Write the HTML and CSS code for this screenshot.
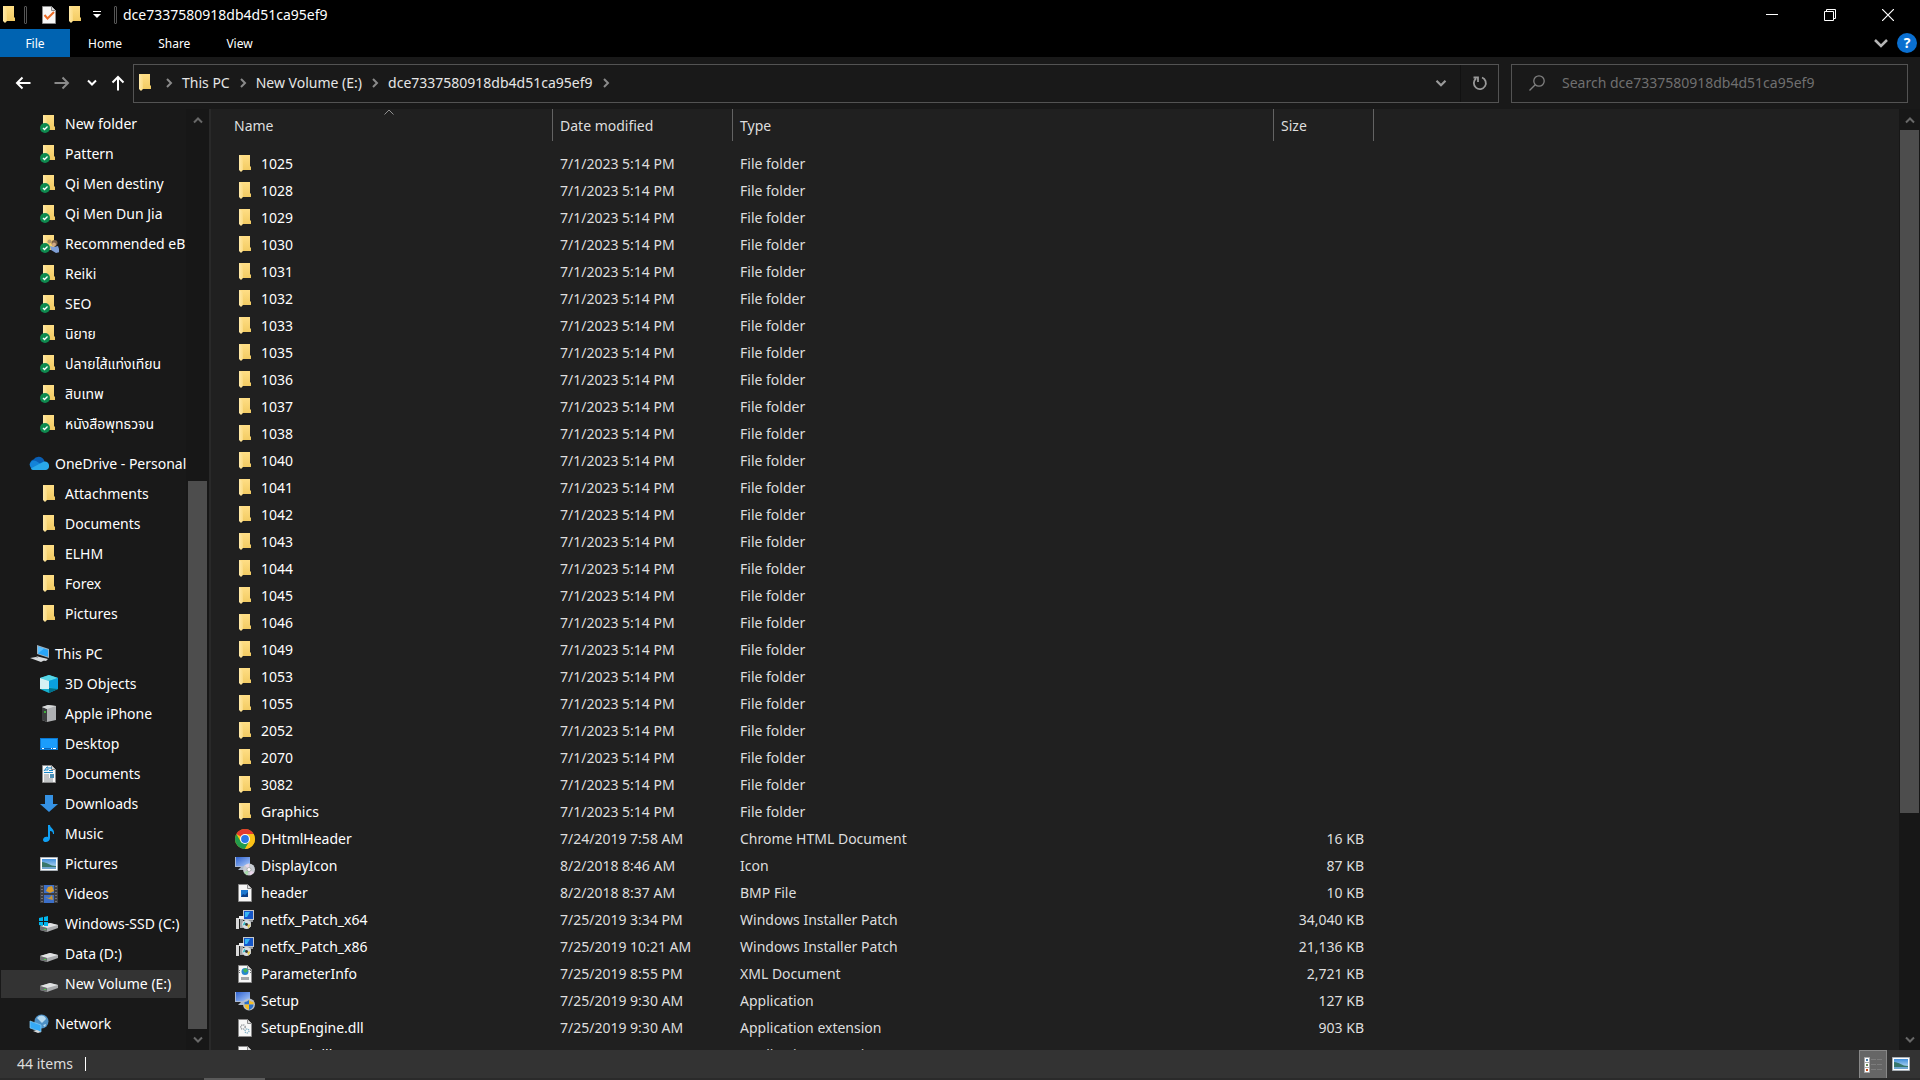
FILE: index.html
```html
<!DOCTYPE html>
<html lang="en">
<head>
<meta charset="utf-8">
<title>dce7337580918db4d51ca95ef9</title>
<link rel="stylesheet" href="styles.css">
</head>
<body>
<svg class="sprite" aria-hidden="true">
  <defs>
    <linearGradient id="g-front" x1="0" x2="1"><stop offset="0" stop-color="#ffe9a9"/><stop offset="1" stop-color="#fbdb82"/></linearGradient>
    <linearGradient id="g-back" x1="0" y1="0" x2="0" y2="1"><stop offset="0" stop-color="#ffde85"/><stop offset="1" stop-color="#f2cb63"/></linearGradient>
    <linearGradient id="g-screen" x1="0" y1="0" x2="1" y2="1"><stop offset="0" stop-color="#2f62cf"/><stop offset="1" stop-color="#a9c9fa"/></linearGradient>
    <linearGradient id="g-sky" x1="0" y1="0" x2="0" y2="1"><stop offset="0" stop-color="#3f8edb"/><stop offset="1" stop-color="#cfe9f7"/></linearGradient>
    <symbol id="folder" viewBox="0 0 20 20">
      <path d="M4 1h11v11l1 1v3H6z" fill="url(#g-back)"/>
      <path d="M4 1l4 2v13l-2 2-2-2z" fill="url(#g-front)"/>
    </symbol>
    <symbol id="synced" viewBox="0 0 20 20">
      <use href="#folder"/>
      <circle cx="6" cy="14" r="5" fill="#0f8a4f"/>
      <path d="M4 14l1.500 1.500L8.500 12.500" fill="none" stroke="#fff" stroke-width="1.300"/>
    </symbol>
    <symbol id="shared" viewBox="0 0 20 20">
      <use href="#synced"/>
      <circle cx="10.500" cy="7.500" r="2" fill="#b59a70"/><circle cx="15.500" cy="9" r="3" fill="#7c6245"/><circle cx="15" cy="10.500" r="2" fill="#d0a984"/>
      <path d="M11 12l4 1 4-1 2 6-4 1-5-3z" fill="#7f9fd6"/>
    </symbol>
    <symbol id="cloud" viewBox="0 0 20 20">
      <path d="M4 14a4.500 4.500 0 0 1 .5-8.500A6 6 0 0 1 15 6l1 4z" fill="#0a5fb4"/>
      <path d="M1 12a4.200 4.200 0 0 1 6-5l8 5-10 3a4 4 0 0 1-4-3z" fill="#1383d8"/>
      <path d="M15 7.500a4.200 4.200 0 0 1 5 4.500 3.500 3.500 0 0 1-3.500 4H5c-1.500 0-2.500-.5-3.200-1.500L12 9z" fill="#29a8ea"/>
    </symbol>
    <symbol id="pc" viewBox="0 0 20 20">
      <path d="M8 1l12 4v9L8 10z" fill="#9fb1bd"/><path d="M9 2.500l10 3.300v7L9 9.500z" fill="#29a5f7"/>
      <path d="M9 2.500l6 2-6 5z" fill="#5cc0ff"/>
      <path d="M7 12l12 3-2 2-5-1zM1 14l6-1 9 3-4 2z" fill="#d7dadc"/>
    </symbol>
    <symbol id="cube" viewBox="0 0 20 20">
      <path d="M10 1l9 3v11l-9 4-9-4V4z" fill="#16b1cf"/><path d="M10 1l9 3-9 3-9-3z" fill="#57d6e6"/>
      <path d="M1 4l9 3v8l-9 0z" fill="#d5f1f3"/><path d="M10 7l9-3v11l-9-2z" fill="#0aa0e0"/><path d="M10 14l9 1-9 4z" fill="#00708c"/>
    </symbol>
    <symbol id="device" viewBox="0 0 20 20">
      <path d="M3 3l6-2 8 1v14L8 18l-5-2z" fill="#aeb0b2"/><path d="M3 3l5 2v13l-5-2z" fill="#3b3d3e"/><path d="M3 3l6-2 8 1-9 3z" fill="#d6d8d9"/><path d="M5 7h2v2H5z" fill="#3fae3c"/>
    </symbol>
    <symbol id="desktop" viewBox="0 0 20 20">
      <path d="M1 4h18v12H1z" fill="#0b78d0"/><path d="M2 5h16v10H2z" fill="#1b9dfc"/><path d="M2 14h16v1H2z" fill="#0a64b8"/><path d="M3 14h2v1H3zM12 14h1v1h-1zM14 14h3v1h-3z" fill="#fff"/>
    </symbol>
    <symbol id="page" viewBox="0 0 20 20">
      <path d="M3.500 1.500h9l4 4v13h-13z" fill="#f7f7f7" stroke="#8b8b8b"/><path d="M12.500 1.500v4h4" fill="#ddd" stroke="#8b8b8b"/>
    </symbol>
    <symbol id="document" viewBox="0 0 20 20">
      <use href="#page"/><path d="M5 7l3-4h1v3H6M10 4h3M10 6.500h4M5 8.500h9" fill="none" stroke="#1686c7"/><path d="M5 11h5M5 13h5M5 15h9M5 17h9" stroke="#8c9296"/><path d="M11 10h4v4h-4z" fill="#4b8db4"/>
    </symbol>
    <symbol id="download" viewBox="0 0 20 20"><path d="M6 1h8v9h5l-9 8-9-8h5z" fill="#3592e4"/></symbol>
    <symbol id="music" viewBox="0 0 20 20"><path d="M9 1h2c0 3 5 4 4 9h-1c0-2-1-3-3-3v7c0 5-7 5-7 2s3-4 5-3z" fill="#10a0f4"/></symbol>
    <symbol id="picture" viewBox="0 0 20 20">
      <path d="M1.500 3.500h17v13h-17z" fill="#fff" stroke="#a9b0b6"/><path d="M3 5h14v10H3z" fill="url(#g-sky)"/><path d="M3 8c5 0 8 4 14 4v3H3z" fill="#37776b"/><path d="M3 13h14v2H3z" fill="#6fa6cf"/>
    </symbol>
    <symbol id="video" viewBox="0 0 20 20">
      <path d="M1 1h18v18H1z" fill="#3d3d40"/><path d="M5 1h10v8H5zM5 11h10v8H5z" fill="#3c6fc7"/><path d="M7 7l2-4 4-1 2 5-4 2z" fill="#d79a2b"/><path d="M6 13l4 1 3-3 1 5-4-1z" fill="#c79432"/><path d="M3 2v17M17 2v17" stroke="#a9a9a9" stroke-dasharray="1 2"/>
    </symbol>
    <symbol id="drive" viewBox="0 0 20 20">
      <path d="M1 12l10-3 8 2v3l-11 4-7-2z" fill="#a9abad"/><path d="M1 12l10-3 8 2-11 3z" fill="#e2e3e4"/><path d="M1 12l7 2v4l-7-2z" fill="#6d6f70"/><path d="M5 15h2v1H5z" fill="#4cd04a"/>
    </symbol>
    <symbol id="sysdrive" viewBox="0 0 20 20">
      <use href="#drive"/><path d="M0 4l4-1v4H0zM5 3l4-1v5H5zM0 8h4v4l-4-1zM5 8h4v4H5z" fill="#00b7ee"/>
    </symbol>
    <symbol id="network" viewBox="0 0 20 20">
      <circle cx="12.500" cy="7.500" r="7" fill="#4d90c5"/><path d="M8 4c3-4 8-3 9 1l-4 4-3-3zM14 11l3-1-1 3z" fill="#b5d9ef"/>
      <path d="M1 7l11 4v7L1 14z" fill="#35aaf7" stroke="#86d0fb" stroke-width=".7"/><path d="M4 17l4-1 4 2-3 1z" fill="#d7dadc"/>
    </symbol>
    <symbol id="chrome" viewBox="0 0 20 20">
      <circle cx="10" cy="10" r="10" fill="#fbc116"/><path d="M10 10L1.340 5A10 10 0 0 1 18.660 5z" fill="#e33b2e"/><path d="M1.340 5L5.700 12.500 10 15l-2 4.800A10 10 0 0 1 1.340 5z" fill="#229b4c"/><path d="M5.700 12.500L10 10l4.300 2.500L10 20 8 19.800z" fill="#229b4c"/><path d="M14.300 12.500L10 20A10 10 0 0 0 18.660 5H10z" fill="#fbc116"/>
      <circle cx="10" cy="10" r="5" fill="#fff"/><circle cx="10" cy="10" r="3.900" fill="#2a77e8"/>
    </symbol>
    <symbol id="monitor" viewBox="0 0 20 20">
      <path d="M0 1h15v10H0z" fill="#a9b9d6"/><path d="M1 1h14v9H1z" fill="url(#g-screen)"/><path d="M6 11h5l1 3H3z" fill="#aeb9ca"/>
    </symbol>
    <symbol id="disc" viewBox="0 0 20 20">
      <use href="#monitor"/><circle cx="14" cy="13.500" r="6" fill="#c8ccd2"/><path d="M14 13.500l-4-4 4-2zM14 13.500l5 3-4 3z" fill="#e9d6ea"/><path d="M14 13.500l-5 3 3 3z" fill="#a6dba9"/><circle cx="14" cy="13.500" r="2" fill="#fff" stroke="#999" stroke-width=".7"/>
    </symbol>
    <symbol id="setup" viewBox="0 0 20 20">
      <use href="#monitor"/><circle cx="14" cy="13.500" r="6" fill="#b8bfca"/><path d="M14 9v4.500H9.500V11c2 0 3-1 4.500-2z" fill="#2a6fc9"/><path d="M14 9c1.500 1 2.500 2 4.500 2v2.500H14z" fill="#f5bd24"/><path d="M9.500 13.500H14V19c-3-1-4.500-3-4.500-5.500z" fill="#f5bd24"/><path d="M18.500 13.500H14V19c3-1 4.500-3 4.500-5.500z" fill="#2a6fc9"/>
    </symbol>
    <symbol id="bmp" viewBox="0 0 20 20"><use href="#page"/><path d="M6 7h7v7H6z" fill="#1d78d0"/><path d="M6 14l2-3 2 1 3-3v5z" fill="#0b3e86"/></symbol>
    <symbol id="patch" viewBox="0 0 20 20">
      <path d="M8 0h11v10H8z" fill="#c5c8cb"/><path d="M9 1h9v8H9z" fill="#1556c8"/><path d="M10 2h5l-3 5h-2z" fill="#35b6f5"/><path d="M10 10h8v2h-8z" fill="#95999c"/>
      <path d="M1 8h3v11H1z" fill="#d9d9d9"/><path d="M5 7h3v11H5z" fill="#a2a4a6"/><path d="M4 6h5v3H4z" fill="#eee"/><path d="M8 11h8v6H8z" fill="#a5a7a9"/>
      <circle cx="11.500" cy="14.500" r="4.500" fill="#d9dde0"/><path d="M11.500 14.500l-4 1 2-4z" fill="#3abfca"/><path d="M11.500 14.500l4 0-2 4z" fill="#e2c84d"/><circle cx="11.500" cy="14.500" r="1.400" fill="#333"/>
    </symbol>
    <symbol id="xml" viewBox="0 0 20 20"><use href="#page"/><circle cx="10" cy="7.500" r="3.500" fill="#2687cf"/><path d="M8 6l3-2 2 3-3 2z" fill="#46b254"/><path d="M5 6L3.500 7.500 5 9M15 6l1.500 1.500L15 9" fill="none" stroke="#777"/><path d="M6 13h8v3H6z" fill="#a4a7aa"/></symbol>
    <symbol id="dll" viewBox="0 0 20 20"><use href="#page"/><circle cx="8" cy="9" r="2.200" fill="none" stroke="#8d9296" stroke-dasharray="1.200 .7" stroke-width="1.300"/><circle cx="12" cy="13" r="2" fill="none" stroke="#7fb0c6" stroke-dasharray="1.200 .7" stroke-width="1.300"/></symbol>
    <symbol id="check" viewBox="0 0 20 20"><use href="#page"/><path d="M5.500 10l3 3.500L15 7" fill="none" stroke="#ea6a24" stroke-width="2"/></symbol>
    <symbol id="details" viewBox="0 0 20 20">
      <path d="M1.500 2.500h5v5h-5zM1.500 7.500h5v5h-5zM1.500 12.500h5v5h-5z" fill="#fff" stroke="#aaa"/><path d="M3 4h2v2H3z" fill="#487ca8"/><path d="M3 9h2v2H3z" fill="#6f8b57"/><path d="M3 14h2v2H3z" fill="#c94c1b"/><path d="M8 4.500h5M14 4.500h5M8 9.500h5M14 9.500h5M8 14.500h5M14 14.500h5" stroke="#7c7c7c"/>
    </symbol>
    <symbol id="chev-up" viewBox="0 0 10 8"><path d="M1 6.500l4-4 4 4" fill="none" stroke="currentColor" stroke-width="2"/></symbol>
    <symbol id="chev-down" viewBox="0 0 10 8"><path d="M1 1.500l4 4 4-4" fill="none" stroke="currentColor" stroke-width="2"/></symbol>
    <symbol id="chev-right" viewBox="0 0 8 10"><path d="M2 1l4 4-4 4" fill="none" stroke="currentColor" stroke-width="2"/></symbol>
    <symbol id="arrow" viewBox="0 0 16 14"><path d="M15.500 7H2M7.500 1.500L2 7l5.500 5.500" fill="none" stroke="currentColor" stroke-width="2"/></symbol>
  </defs>
</svg>

<div class="window">
  <header class="titlebar">
    <svg class="icon"><use href="#folder"/></svg>
    <span class="rule"></span>
    <button class="quick" aria-label="Properties"><svg class="icon"><use href="#check"/></svg></button>
    <button class="quick" aria-label="New folder"><svg class="icon"><use href="#folder"/></svg></button>
    <button class="quick narrow" aria-label="Customize toolbar"><svg width="8" height="8" viewBox="0 0 8 8"><path d="M0 .5h8" stroke="#fff"/><path d="M0 3h8L4 7z" fill="#fff"/></svg></button>
    <span class="rule"></span>
    <h1 class="title">dce7337580918db4d51ca95ef9</h1>
    <div class="caption">
      <button aria-label="Minimize"><svg width="12" height="12" viewBox="0 0 12 12"><path d="M0 5.500h12" stroke="#fff"/></svg></button>
      <button aria-label="Restore"><svg width="12" height="12" viewBox="0 0 12 12"><path d="M.5 2.500h9v9h-9zM2.500 2.500v-2h9v9h-2" fill="none" stroke="#fff"/></svg></button>
      <button aria-label="Close"><svg width="12" height="12" viewBox="0 0 12 12"><path d="M0 0l12 12M12 0L0 12" stroke="#fff" stroke-width="1.200"/></svg></button>
    </div>
  </header>

  <nav class="ribbon" aria-label="Ribbon">
    <button class="tab file">File</button>
    <button class="tab">Home</button>
    <button class="tab">Share</button>
    <button class="tab">View</button>
    <div class="ribbon-end">
      <button class="expand" aria-label="Expand ribbon"><svg width="14" height="10" viewBox="0 0 14 10"><path d="M1 2l6 6 6-6" fill="none" stroke="currentColor" stroke-width="2.500"/></svg></button>
      <button class="help" aria-label="Help">?</button>
    </div>
  </nav>

  <div class="navbar">
    <button class="nav back" aria-label="Back"><svg width="16" height="14"><use href="#arrow"/></svg></button>
    <button class="nav forward" aria-label="Forward"><svg width="16" height="14"><use href="#arrow"/></svg></button>
    <button class="nav recent" aria-label="Recent locations"><svg width="10" height="8"><use href="#chev-down"/></svg></button>
    <button class="nav up" aria-label="Up"><svg width="16" height="14"><use href="#arrow"/></svg></button>
    <div class="address">
      <svg class="icon"><use href="#folder"/></svg>
      <svg class="sep"><use href="#chev-right"/></svg>
      <a href="#">This PC</a>
      <svg class="sep"><use href="#chev-right"/></svg>
      <a href="#">New Volume (E:)</a>
      <svg class="sep"><use href="#chev-right"/></svg>
      <a href="#">dce7337580918db4d51ca95ef9</a>
      <svg class="sep"><use href="#chev-right"/></svg>
      <button class="history" aria-label="Previous locations"><svg width="12" height="9" viewBox="0 0 10 8"><use href="#chev-down"/></svg></button>
      <button class="refresh" aria-label="Refresh"><svg width="16" height="16" viewBox="0 0 16 16"><path d="M10 2.500A6 6 0 1 1 4 3.500M1.500 2.500h4.500v4.500" fill="none" stroke="currentColor" stroke-width="1.800"/></svg></button>
    </div>
    <label class="search">
      <svg width="16" height="16" viewBox="0 0 16 16"><circle cx="10" cy="6" r="5.200" fill="none" stroke="currentColor" stroke-width="1.300"/><path d="M6.200 9.800L.5 15.500" stroke="currentColor" stroke-width="1.300"/></svg>
      <input type="text" aria-label="Search" placeholder="Search dce7337580918db4d51ca95ef9">
    </label>
  </div>

  <div class="body">
    <aside class="sidebar">
      <nav class="tree" aria-label="Folders">
        <ul>
          <li><a href="#"><svg class="icon"><use href="#synced"/></svg>New folder</a></li>
          <li><a href="#"><svg class="icon"><use href="#synced"/></svg>Pattern</a></li>
          <li><a href="#"><svg class="icon"><use href="#synced"/></svg>Qi Men destiny</a></li>
          <li><a href="#"><svg class="icon"><use href="#synced"/></svg>Qi Men Dun Jia</a></li>
          <li><a href="#"><svg class="icon"><use href="#shared"/></svg>Recommended eB</a></li>
          <li><a href="#"><svg class="icon"><use href="#synced"/></svg>Reiki</a></li>
          <li><a href="#"><svg class="icon"><use href="#synced"/></svg>SEO</a></li>
          <li><a href="#" lang="th"><svg class="icon"><use href="#synced"/></svg>นิยาย</a></li>
          <li><a href="#" lang="th"><svg class="icon"><use href="#synced"/></svg>ปลายไส้แท่งเทียน</a></li>
          <li><a href="#" lang="th"><svg class="icon"><use href="#synced"/></svg>สิบเทพ</a></li>
          <li><a href="#" lang="th"><svg class="icon"><use href="#synced"/></svg>หนังสือพุทธวจน</a></li>
        </ul>
        <ul>
          <li><a href="#" class="root"><svg class="icon"><use href="#cloud"/></svg>OneDrive - Personal</a></li>
          <li><a href="#"><svg class="icon"><use href="#folder"/></svg>Attachments</a></li>
          <li><a href="#"><svg class="icon"><use href="#folder"/></svg>Documents</a></li>
          <li><a href="#"><svg class="icon"><use href="#folder"/></svg>ELHM</a></li>
          <li><a href="#"><svg class="icon"><use href="#folder"/></svg>Forex</a></li>
          <li><a href="#"><svg class="icon"><use href="#folder"/></svg>Pictures</a></li>
        </ul>
        <ul>
          <li><a href="#" class="root"><svg class="icon"><use href="#pc"/></svg>This PC</a></li>
          <li><a href="#"><svg class="icon"><use href="#cube"/></svg>3D Objects</a></li>
          <li><a href="#"><svg class="icon"><use href="#device"/></svg>Apple iPhone</a></li>
          <li><a href="#"><svg class="icon"><use href="#desktop"/></svg>Desktop</a></li>
          <li><a href="#"><svg class="icon"><use href="#document"/></svg>Documents</a></li>
          <li><a href="#"><svg class="icon"><use href="#download"/></svg>Downloads</a></li>
          <li><a href="#"><svg class="icon"><use href="#music"/></svg>Music</a></li>
          <li><a href="#"><svg class="icon"><use href="#picture"/></svg>Pictures</a></li>
          <li><a href="#"><svg class="icon"><use href="#video"/></svg>Videos</a></li>
          <li><a href="#"><svg class="icon"><use href="#sysdrive"/></svg>Windows-SSD (C:)</a></li>
          <li><a href="#"><svg class="icon"><use href="#drive"/></svg>Data (D:)</a></li>
          <li><a href="#" class="selected" aria-current="page"><svg class="icon"><use href="#drive"/></svg>New Volume (E:)</a></li>
        </ul>
        <ul>
          <li><a href="#" class="root"><svg class="icon"><use href="#network"/></svg>Network</a></li>
        </ul>
      </nav>
      <div class="scrollbar tree-scroll">
        <svg class="step"><use href="#chev-up"/></svg>
        <div class="track"><div class="thumb"></div></div>
        <svg class="step"><use href="#chev-down"/></svg>
      </div>
    </aside>

    <main class="files">
      <div class="listing">
        <table>
          <colgroup><col class="c-name"><col class="c-date"><col class="c-type"><col class="c-size"></colgroup>
          <thead>
            <tr>
              <th scope="col" aria-sort="ascending">Name<svg class="sort" width="10" height="6" viewBox="0 0 10 6"><path d="M.5 5.500L5 1l4.500 4.500" fill="none" stroke="#8f8f8f"/></svg></th>
              <th scope="col">Date modified</th><th scope="col">Type</th><th scope="col">Size</th>
            </tr>
          </thead>
          <tbody>
            <tr><td><svg class="icon"><use href="#folder"/></svg>1025</td><td>7/1/2023 5:14 PM</td><td>File folder</td><td></td></tr>
            <tr><td><svg class="icon"><use href="#folder"/></svg>1028</td><td>7/1/2023 5:14 PM</td><td>File folder</td><td></td></tr>
            <tr><td><svg class="icon"><use href="#folder"/></svg>1029</td><td>7/1/2023 5:14 PM</td><td>File folder</td><td></td></tr>
            <tr><td><svg class="icon"><use href="#folder"/></svg>1030</td><td>7/1/2023 5:14 PM</td><td>File folder</td><td></td></tr>
            <tr><td><svg class="icon"><use href="#folder"/></svg>1031</td><td>7/1/2023 5:14 PM</td><td>File folder</td><td></td></tr>
            <tr><td><svg class="icon"><use href="#folder"/></svg>1032</td><td>7/1/2023 5:14 PM</td><td>File folder</td><td></td></tr>
            <tr><td><svg class="icon"><use href="#folder"/></svg>1033</td><td>7/1/2023 5:14 PM</td><td>File folder</td><td></td></tr>
            <tr><td><svg class="icon"><use href="#folder"/></svg>1035</td><td>7/1/2023 5:14 PM</td><td>File folder</td><td></td></tr>
            <tr><td><svg class="icon"><use href="#folder"/></svg>1036</td><td>7/1/2023 5:14 PM</td><td>File folder</td><td></td></tr>
            <tr><td><svg class="icon"><use href="#folder"/></svg>1037</td><td>7/1/2023 5:14 PM</td><td>File folder</td><td></td></tr>
            <tr><td><svg class="icon"><use href="#folder"/></svg>1038</td><td>7/1/2023 5:14 PM</td><td>File folder</td><td></td></tr>
            <tr><td><svg class="icon"><use href="#folder"/></svg>1040</td><td>7/1/2023 5:14 PM</td><td>File folder</td><td></td></tr>
            <tr><td><svg class="icon"><use href="#folder"/></svg>1041</td><td>7/1/2023 5:14 PM</td><td>File folder</td><td></td></tr>
            <tr><td><svg class="icon"><use href="#folder"/></svg>1042</td><td>7/1/2023 5:14 PM</td><td>File folder</td><td></td></tr>
            <tr><td><svg class="icon"><use href="#folder"/></svg>1043</td><td>7/1/2023 5:14 PM</td><td>File folder</td><td></td></tr>
            <tr><td><svg class="icon"><use href="#folder"/></svg>1044</td><td>7/1/2023 5:14 PM</td><td>File folder</td><td></td></tr>
            <tr><td><svg class="icon"><use href="#folder"/></svg>1045</td><td>7/1/2023 5:14 PM</td><td>File folder</td><td></td></tr>
            <tr><td><svg class="icon"><use href="#folder"/></svg>1046</td><td>7/1/2023 5:14 PM</td><td>File folder</td><td></td></tr>
            <tr><td><svg class="icon"><use href="#folder"/></svg>1049</td><td>7/1/2023 5:14 PM</td><td>File folder</td><td></td></tr>
            <tr><td><svg class="icon"><use href="#folder"/></svg>1053</td><td>7/1/2023 5:14 PM</td><td>File folder</td><td></td></tr>
            <tr><td><svg class="icon"><use href="#folder"/></svg>1055</td><td>7/1/2023 5:14 PM</td><td>File folder</td><td></td></tr>
            <tr><td><svg class="icon"><use href="#folder"/></svg>2052</td><td>7/1/2023 5:14 PM</td><td>File folder</td><td></td></tr>
            <tr><td><svg class="icon"><use href="#folder"/></svg>2070</td><td>7/1/2023 5:14 PM</td><td>File folder</td><td></td></tr>
            <tr><td><svg class="icon"><use href="#folder"/></svg>3082</td><td>7/1/2023 5:14 PM</td><td>File folder</td><td></td></tr>
            <tr><td><svg class="icon"><use href="#folder"/></svg>Graphics</td><td>7/1/2023 5:14 PM</td><td>File folder</td><td></td></tr>
            <tr><td><svg class="icon"><use href="#chrome"/></svg>DHtmlHeader</td><td>7/24/2019 7:58 AM</td><td>Chrome HTML Document</td><td>16 KB</td></tr>
            <tr><td><svg class="icon"><use href="#disc"/></svg>DisplayIcon</td><td>8/2/2018 8:46 AM</td><td>Icon</td><td>87 KB</td></tr>
            <tr><td><svg class="icon"><use href="#bmp"/></svg>header</td><td>8/2/2018 8:37 AM</td><td>BMP File</td><td>10 KB</td></tr>
            <tr><td><svg class="icon"><use href="#patch"/></svg>netfx_Patch_x64</td><td>7/25/2019 3:34 PM</td><td>Windows Installer Patch</td><td>34,040 KB</td></tr>
            <tr><td><svg class="icon"><use href="#patch"/></svg>netfx_Patch_x86</td><td>7/25/2019 10:21 AM</td><td>Windows Installer Patch</td><td>21,136 KB</td></tr>
            <tr><td><svg class="icon"><use href="#xml"/></svg>ParameterInfo</td><td>7/25/2019 8:55 PM</td><td>XML Document</td><td>2,721 KB</td></tr>
            <tr><td><svg class="icon"><use href="#setup"/></svg>Setup</td><td>7/25/2019 9:30 AM</td><td>Application</td><td>127 KB</td></tr>
            <tr><td><svg class="icon"><use href="#dll"/></svg>SetupEngine.dll</td><td>7/25/2019 9:30 AM</td><td>Application extension</td><td>903 KB</td></tr>
            <tr><td><svg class="icon"><use href="#dll"/></svg>SetupUi.dll</td><td>7/25/2019 9:30 AM</td><td>Application extension</td><td>343 KB</td></tr>
          </tbody>
        </table>
      </div>
      <div class="scrollbar file-scroll">
        <svg class="step"><use href="#chev-up"/></svg>
        <div class="track"><div class="thumb"></div></div>
        <svg class="step"><use href="#chev-down"/></svg>
      </div>
    </main>
  </div>

  <footer class="status">
    <span class="count">44 items</span>
    <button class="view on" aria-label="Details view" aria-pressed="true"><svg class="icon"><use href="#details"/></svg></button>
    <button class="view" aria-label="Large thumbnails"><svg class="icon"><use href="#picture"/></svg></button>
  </footer>
  <div class="taskbar"><span class="task"></span></div>
</div>
</body>
</html>
```
FILE: styles.css
```css
* { box-sizing: border-box; }
body {
  margin: 0;
  background: #191919;
  color: #fff;
  font: 14px/20px "Noto Sans", "Noto Sans Thai", "Open Sans", sans-serif;
}
button {
  display: flex; align-items: center; justify-content: center;
  margin: 0; padding: 0; border: 0;
  background: none; color: inherit; font: inherit;
}
a { color: inherit; text-decoration: none; }
ul { list-style: none; margin: 0; padding: 0; }
svg { flex: none; display: block; }
.sprite { position: absolute; width: 0; height: 0; }
.icon { width: 20px; height: 20px; }

.window { display: flex; flex-direction: column; height: 100vh; overflow: hidden; }

.titlebar { display: flex; align-items: center; height: 29px; background: #000; flex: none; }
.titlebar > .icon { margin-left: -1px; margin-right: 5px; }
.rule { width: 3px; height: 18px; border: 1px solid #555; border-radius: 1px; }
.quick { width: 26px; }
.rule + .quick { margin-left: 9px; }
.quick.narrow { width: 18px; margin-right: 8px; }
.title { margin: 0 0 0 6px; font-size: 14px; font-weight: 400; }
.caption { display: flex; margin-left: auto; padding-right: 3px; align-self: stretch; }
.caption button { width: 58px; }

.ribbon { display: flex; height: 28px; background: #000; font-size: 12px; flex: none; }
.tab { padding: 1px 18px 0; }
.tab.file { width: 70px; background: #0063b1; }
.ribbon-end { display: flex; align-items: center; gap: 9px; margin-left: auto; padding-right: 3px; }
.expand { color: #b5b5b5; }
.help { width: 20px; height: 20px; border-radius: 50%; background: #0a6fd0; font-size: 14px; font-weight: 700; }

.navbar { display: flex; align-items: center; height: 52px; padding: 0 12px 0 15px; flex: none; }
.nav.forward { margin-left: 23px; color: #8a8a8a; }
.nav.forward svg { transform: rotate(180deg); }
.nav.recent { margin-left: 17px; }
.nav.up { margin: 0 7px 0 13px; }
.nav.up svg { transform: rotate(90deg); }
.address { display: flex; align-items: center; flex: 1; height: 39px; padding-left: 1px; border: 1px solid #535353; color: #e6e6e6; }
.address .icon { margin-right: 10px; }
.sep { width: 8px; height: 10px; margin: 0 9px; color: #8a8a8a; }
.address .icon + .sep { margin-left: 0; }
.history { width: 38px; margin-left: auto; color: #999; }
.refresh { width: 38px; align-self: stretch; border-left: 1px solid #111; color: #999; }
.search { display: flex; align-items: center; gap: 17px; width: 397px; height: 39px; margin-left: 12px; padding: 0 17px; border: 1px solid #535353; color: #808080; }
.search input { flex: 1; min-width: 0; padding: 0; border: 0; outline: 0; background: none; color: #fff; font: inherit; }
.search input::placeholder { color: #707070; opacity: 1; }

.body { display: flex; flex: 1; min-height: 0; }
.sidebar { display: flex; width: 211px; border-right: 2px solid #292929; flex: none; }
.tree { flex: 1; min-width: 0; padding-left: 1px; overflow: hidden; }
.tree ul + ul { margin-top: 10px; }
.tree li { height: 30px; padding-top: 1px; }
.tree a { display: flex; align-items: center; gap: 6px; height: 28px; padding-left: 38px; white-space: nowrap; overflow: hidden; }
.tree a.root { padding-left: 28px; }
.tree a.selected { background: #333; }

.scrollbar { display: flex; flex-direction: column; background: #171717; color: #686868; flex: none; }
.tree-scroll { width: 23px; padding: 0 2px; }
.file-scroll { width: 21px; padding: 0 1px; }
.step { width: 10px; height: 8px; margin: 7px auto 6px; }
.track { flex: 1; display: flex; flex-direction: column; }
.thumb { background: #4d4d4d; }
.tree-scroll .track { justify-content: flex-end; }
.tree-scroll .thumb { height: 61%; }
.file-scroll .thumb { height: 76%; }

.files { display: flex; flex: 1; min-width: 0; background: #202020; }
.listing { flex: 1; min-width: 0; overflow: hidden; }
table { width: 1163px; border-collapse: separate; border-spacing: 0; table-layout: fixed; }
.c-name { width: 342px; }
.c-date { width: 180px; }
.c-type { width: 541px; }
.c-size { width: 100px; }
th { position: relative; height: 32px; padding: 1px 7px 0; border-right: 1px solid #636363; font-weight: 400; text-align: left; color: #dedede; }
th:first-child { padding-left: 23px; }
.sort { position: absolute; left: 173px; top: 0; }
thead::after { content: ""; display: block; height: 9px; }
td { height: 27px; padding: 0 7px; color: #dedede; white-space: nowrap; }
td:first-child { padding-left: 24px; color: #fff; }
td:first-child .icon { display: inline-block; vertical-align: top; margin-right: 6px; }
td:last-child { padding-right: 10px; text-align: right; }

.status { display: flex; align-items: center; height: 28px; padding: 0 5px 0 17px; background: #333; color: #dedede; flex: none; }
.count { margin-right: auto; padding-right: 12px; line-height: 14px; border-right: 1px solid #fff; }
.view { width: 28px; height: 28px; }
.view.on { background: #666; border: 1px solid #888; border-bottom: 0; }
.taskbar { height: 2px; background: #2a2a2a; flex: none; }
.task { display: block; width: 61px; height: 2px; margin-left: 204px; background: #5a5a5a; }
```
